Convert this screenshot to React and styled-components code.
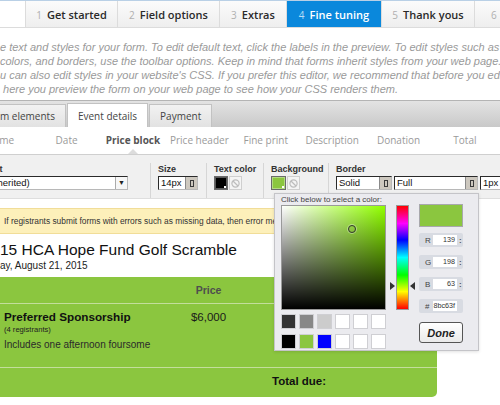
import styled, { createGlobalStyle } from "styled-components";

const GlobalStyle = createGlobalStyle`
  *, *::before, *::after { box-sizing: border-box; }
  html, body { margin: 0; padding: 0; background: #fff; }
  body { overflow: hidden; font-family: "Liberation Sans", Arial, sans-serif; }
`;

const Page = styled.div`
  position: relative;
  width: 500px;
  height: 405px;
  overflow: hidden;
  background: #fff;
`;

/* wizard steps */
const Steps = styled.ul`
  display: flex;
  height: 28px;
  margin: 0;
  padding: 0 0 0 25px;
  list-style: none;
  border-top: 1px solid #b9d0e6;
  border-bottom: 1px solid #dcdcdc;
`;

const Step = styled.li`
  flex: none;
  width: ${({ $w }) => $w}px;
  display: flex;
  align-items: center;
  justify-content: center;
  gap: 5px;
  border-left: 1px solid #dcdcdc;
  background: ${({ $active }) => ($active ? "#0a88dc" : "linear-gradient(#fbfbfb, #eeeeee)")};
  color: ${({ $active }) => ($active ? "#fff" : "#2a2a2a")};
  font: 600 11px "Open Sans", sans-serif;
  white-space: nowrap;
  overflow: hidden;
`;

const StepNum = styled.span`
  font-weight: 400;
  font-size: 10px;
  padding-top: 2px;
  color: ${({ $active }) => ($active ? "#b9ddf6" : "#b0b0b0")};
`;

const Intro = styled.div`
  padding: 12px 0 4px;
  font: italic 11px/14px "Liberation Sans", Arial, sans-serif;
  color: #9a9a9a;
  white-space: nowrap;
  overflow: hidden;
`;

/* editor panel */
const PanelTabs = styled.div`
  display: flex;
  align-items: flex-end;
  gap: 1px;
  height: 27px;
  border-top: 1px solid #b4b4b4;
  background: linear-gradient(#e3e3e3, #c9c9c9);
`;

const PanelTab = styled.div`
  height: ${({ $active }) => ($active ? 24 : 23)}px;
  display: flex;
  align-items: center;
  padding: 0 10px 0 ${({ $cut }) => ($cut ? 0 : 10)}px;
  background: ${({ $active }) => ($active ? "#fff" : "linear-gradient(#f2f2f2, #e2e2e2)")};
  border: 1px solid #c2c2c2;
  border-bottom: none;
  ${({ $cut }) => $cut && "border-left: none;"}
  font: 10px "Open Sans", sans-serif;
  color: #444;
  white-space: nowrap;
`;

const SubNav = styled.div`
  display: flex;
  height: 28px;
  margin-left: -33px;
  border-bottom: 1px solid #cfcfcf;
  background: #fff;
`;

const SubItem = styled.div`
  position: relative;
  flex: none;
  width: 66.4px;
  text-align: center;
  font: ${({ $active }) => ($active ? 700 : 400)} 10px/27px "Open Sans", sans-serif;
  color: ${({ $active }) => ($active ? "#555" : "#9a9a9a")};
  white-space: nowrap;

  &::after {
    content: "";
    display: ${({ $active }) => ($active ? "block" : "none")};
    position: absolute;
    left: 50%;
    bottom: 0;
    margin-left: -5px;
    border-left: 5px solid transparent;
    border-right: 5px solid transparent;
    border-bottom: 5px solid #dcdcdc;
  }
`;

const Toolbar = styled.div`
  display: flex;
  height: 44px;
  margin-left: -17px;
  padding-top: 8px;
  background: #f0f0f0;
  border-bottom: 1px solid #dedede;
`;

const Group = styled.div`
  flex: none;
  width: ${({ $w }) => $w}px;
  display: flex;
  flex-direction: column;
  gap: 1px;
  padding-left: ${({ $first }) => ($first ? 0 : 7)}px;
  border-left: ${({ $first }) => ($first ? "none" : "1px solid #d6d6d6")};
`;

const Label = styled.div`
  height: 12px;
  font: 700 9px/12px "Liberation Sans", Arial, sans-serif;
  color: #333;
  white-space: nowrap;
`;

const Controls = styled.div`
  display: flex;
  gap: ${({ $gap }) => $gap ?? 2}px;
  margin-left: ${({ $shift }) => $shift ?? 0}px;
`;

const Field = styled.div`
  flex: none;
  display: flex;
  width: ${({ $w }) => $w}px;
  height: 14px;
  background: #fff;
  border: 1px solid;
  border-color: #2a2a2a #b8b8b8 #b8b8b8 #2a2a2a;
  font: 9.5px/12px "Liberation Sans", Arial, sans-serif;
  color: #111;
`;

const FieldText = styled.span`
  flex: 1;
  padding-left: 2px;
  overflow: hidden;
  white-space: nowrap;
`;

const Spin = styled.span`
  flex: none;
  width: 12px;
  display: flex;
  align-items: center;
  justify-content: center;
  background: #cdc8bf;
  border-left: 1px solid #8a8a8a;

  &::before {
    content: "";
    width: 4px;
    height: 7px;
    border: 1px solid #3a3a3a;
  }
`;

const Arrow = styled.span`
  flex: none;
  width: 12px;
  display: flex;
  align-items: center;
  justify-content: center;
  background: #f6f6f6;
  border-left: 1px solid #aaa;
  font-size: 7px;
  color: #222;
`;

const Swatch = styled.span`
  position: relative;
  flex: none;
  width: ${({ $w }) => $w ?? 14}px;
  height: 14px;
  background: ${({ $color }) => $color};
  border: 1px solid #6a6a6a;
  box-shadow: inset 0 0 0 1px rgba(255, 255, 255, 0.35);

  &::after {
    content: "";
    position: absolute;
    right: 1px;
    bottom: 1px;
    width: 2px;
    height: 2px;
    background: #fff;
  }
`;

const NoColor = styled.span`
  flex: none;
  width: 13px;
  height: 14px;
  display: flex;
  align-items: center;
  justify-content: center;
  background: #f4f4f4;
  border: 1px solid #cfcfcf;
`;

function NoColorIcon() {
  return (
    <NoColor>
      <svg width="9" height="9" viewBox="0 0 9 9">
        <circle cx="4.5" cy="4.5" r="3.6" fill="none" stroke="#bdbdbd" strokeWidth="1.2" />
        <line x1="2" y1="2" x2="7" y2="7" stroke="#bdbdbd" strokeWidth="1.2" />
      </svg>
    </NoColor>
  );
}

/* form preview */
const Preview = styled.div`
  width: 437px;
  padding-top: 9px;
`;

const Notice = styled.div`
  height: 26px;
  padding-left: 4px;
  background: #fdf0ba;
  border-top: 1px solid #f1dd98;
  border-bottom: 1px solid #f1dd98;
  font: 8.4px/24px "Liberation Sans", Arial, sans-serif;
  color: #333;
  white-space: nowrap;
  overflow: hidden;
`;

const EventTitle = styled.h1`
  margin: 7px 0 0;
  font: 400 15.5px/18px "Liberation Sans", Arial, sans-serif;
  color: #111;
  white-space: nowrap;
`;

const EventDate = styled.div`
  margin-bottom: 5px;
  font: 10px/13px "Liberation Sans", Arial, sans-serif;
  color: #222;
`;

const PriceBlock = styled.div`
  background: #8bc63f;
  border-radius: 0 0 5px 0;
  font-family: "Liberation Sans", Arial, sans-serif;
`;

const PriceRow = styled.div`
  display: grid;
  grid-template-columns: 171px 75px 1fr;
  height: ${({ $h }) => $h}px;
  padding-top: ${({ $pt }) => $pt ?? 0}px;
  border-bottom: ${({ $last }) => ($last ? "none" : "1px solid #c3de9c")};
`;

const PriceHead = styled.div`
  grid-column: 2;
  text-align: center;
  font: 700 10.5px/26px "Liberation Sans", Arial, sans-serif;
  color: #4e4e4e;
`;

const ItemCell = styled.div`
  padding-left: 4px;
  color: #111;
`;

const ItemName = styled.div`
  font: 700 11.7px/14px "Liberation Sans", Arial, sans-serif;
  white-space: nowrap;
`;

const ItemNote = styled.div`
  font: 7.6px/11px "Liberation Sans", Arial, sans-serif;
  color: #222;
`;

const ItemDesc = styled.div`
  margin-top: 4px;
  font: 10px/12px "Liberation Sans", Arial, sans-serif;
  color: #2a2a2a;
  white-space: nowrap;
`;

const ItemPrice = styled.div`
  text-align: center;
  font: 11.5px/14px "Liberation Sans", Arial, sans-serif;
  color: #1a1a1a;
`;

const TotalLabel = styled.div`
  grid-column: 1 / -1;
  padding-left: 272px;
  font: 700 11.5px/14px "Liberation Sans", Arial, sans-serif;
  color: #111;
`;

/* colour picker popup */
const Picker = styled.div`
  position: absolute;
  left: 274px;
  top: 193px;
  width: 205px;
  height: 158px;
  display: grid;
  grid-template-columns: 105px 33px 44px;
  grid-template-rows: 11px 105px auto;
  padding: 0 15px 0 6px;
  background: #ebebef;
  border: 1px solid #c4c4c8;
  box-shadow: 0 1px 3px rgba(0, 0, 0, 0.12);
  font-family: "Liberation Sans", Arial, sans-serif;
`;

const PickerHint = styled.div`
  grid-column: 1 / 3;
  font: 8px/11px "Liberation Sans", Arial, sans-serif;
  color: #444;
  white-space: nowrap;
`;

const SatVal = styled.div`
  position: relative;
  grid-column: 1;
  grid-row: 2;
  border: 1px solid #9a9a9a;
  background:
    linear-gradient(to top, #000, rgba(0, 0, 0, 0)),
    linear-gradient(to right, #fff, hsl(86, 100%, 50%));
`;

const Marker = styled.span`
  position: absolute;
  left: 66px;
  top: 19px;
  width: 8px;
  height: 8px;
  border-radius: 50%;
  border: 1px solid #333;
  box-shadow: 0 0 0 1px rgba(255, 255, 255, 0.35);
`;

const HueTrack = styled.div`
  position: relative;
  grid-column: 2;
  grid-row: 2;
  margin: 0 10px;
  border: 1px solid #9a9a9a;
  background: linear-gradient(#f00, #f0f 17%, #00f 33%, #0ff 50%, #0f0 67%, #ff0 83%, #f00);

  &::before,
  &::after {
    content: "";
    position: absolute;
    top: 76px;
    border-top: 4px solid transparent;
    border-bottom: 4px solid transparent;
  }
  &::before {
    left: -7px;
    border-left: 5px solid #333;
  }
  &::after {
    right: -7px;
    border-right: 5px solid #333;
  }
`;

const SwatchGrid = styled.div`
  grid-column: 1;
  grid-row: 3;
  display: grid;
  grid-template-columns: repeat(6, 15px);
  gap: 3px;
  margin-top: 4px;
`;

const Chip = styled.span`
  height: 15px;
  background: ${({ $color }) => $color};
  border: 1px solid #cfcfd3;
`;

const PickerSide = styled.div`
  grid-column: 3;
  grid-row: 2 / 4;
  display: flex;
  flex-direction: column;
  gap: 8px;
  margin-top: -1px;
`;

const Current = styled.div`
  height: 23px;
  margin-bottom: -2px;
  background: #8bc63f;
  border: 1px solid #a8a8ac;
`;

const ValueRow = styled.div`
  display: flex;
  align-items: center;
  height: 14px;
  padding-left: 6px;
  background: #d8dbe2;
  border-radius: 2px;
  font: 8px "Liberation Sans", Arial, sans-serif;
  color: #444;
`;

const ValueLabel = styled.span`
  width: 8px;
`;

const ValueBox = styled.span`
  width: 24px;
  height: 10px;
  padding-right: 2px;
  background: #fff;
  text-align: right;
  font-size: 7.2px;
  line-height: 10px;
  color: #333;
`;

const ValueSpin = styled.span`
  margin-left: 2px;
  font-size: 8px;
  font-weight: 700;
  color: #555;
`;

const DoneButton = styled.button`
  height: 21px;
  margin-top: 1px;
  padding: 0;
  border: 1px solid #555;
  border-radius: 3px;
  background: linear-gradient(#ffffff, #eaeaea);
  font: italic 700 11px "Liberation Sans", Arial, sans-serif;
  color: #222;
`;

const steps = [
  { n: 1, label: "Get started", w: 92 },
  { n: 2, label: "Field options", w: 102 },
  { n: 3, label: "Extras", w: 67 },
  { n: 4, label: "Fine tuning", w: 95, active: true },
  { n: 5, label: "Thank yous", w: 93 },
  { n: 6, label: "Tell others", w: 100 },
];

const introLines = [
  "e text and styles for your form. To edit default text, click the labels in the preview. To edit styles such as",
  "colors, and borders, use the toolbar options. Keep in mind that forms inherit styles from your web page.",
  "u can also edit styles in your website's CSS. If you prefer this editor, we recommend that before you edit,",
  "\u00a0here you preview the form on your web page to see how your CSS renders them.",
];

const subItems = ["Name", "Date", "Price block", "Price header", "Fine print", "Description", "Donation", "Total"];

const chips = ["#333333", "#888888", "#cccccc", "#fff", "#fff", "#fff", "#000000", "#8bc63f", "#0000ff", "#fff", "#fff", "#fff"];

const values = [
  ["R", "139"],
  ["G", "198"],
  ["B", "63"],
];

export default function App() {
  return (
    <Page>
      <GlobalStyle />
      <Steps>
        {steps.map((s) => (
          <Step key={s.n} $w={s.w} $active={s.active}>
            <StepNum $active={s.active}>{s.n}</StepNum>
            {s.label}
          </Step>
        ))}
      </Steps>

      <Intro>
        {introLines.map((line) => (
          <div key={line}>{line}</div>
        ))}
      </Intro>

      <PanelTabs>
        <PanelTab $cut>m elements</PanelTab>
        <PanelTab $active>Event details</PanelTab>
        <PanelTab>Payment</PanelTab>
      </PanelTabs>

      <SubNav>
        {subItems.map((item) => (
          <SubItem key={item} $active={item === "Price block"}>
            {item}
          </SubItem>
        ))}
      </SubNav>

      <Toolbar>
        <Group $w={167} $first>
          <Label>Font</Label>
          <Controls $shift={1}>
            <Field $w={144}>
              <FieldText>(inherited)</FieldText>
              <Arrow>▼</Arrow>
            </Field>
          </Controls>
        </Group>
        <Group $w={56}>
          <Label>Size</Label>
          <Controls>
            <Field $w={40}>
              <FieldText>14px</FieldText>
              <Spin />
            </Field>
          </Controls>
        </Group>
        <Group $w={57}>
          <Label>Text color</Label>
          <Controls $gap={1}>
            <Swatch $color="#000" />
            <NoColorIcon />
          </Controls>
        </Group>
        <Group $w={65}>
          <Label>Background</Label>
          <Controls $gap={1}>
            <Swatch $color="#8bc63f" $w={15} />
            <NoColorIcon />
          </Controls>
        </Group>
        <Group $w={200}>
          <Label>Border</Label>
          <Controls>
            <Field $w={56}>
              <FieldText>Solid</FieldText>
              <Spin />
            </Field>
            <Field $w={84}>
              <FieldText>Full</FieldText>
              <Spin />
            </Field>
            <Field $w={40}>
              <FieldText>1px</FieldText>
              <Spin />
            </Field>
          </Controls>
        </Group>
      </Toolbar>

      <Preview>
        <Notice>
          If registrants submit forms with errors such as missing data, then error messages appear here.
        </Notice>
        <EventTitle>15 HCA Hope Fund Golf Scramble</EventTitle>
        <EventDate>ay, August 21, 2015</EventDate>
        <PriceBlock>
          <PriceRow $h={27}>
            <PriceHead>Price</PriceHead>
          </PriceRow>
          <PriceRow $h={64} $pt={6}>
            <ItemCell>
              <ItemName>Preferred Sponsorship</ItemName>
              <ItemNote>(4 registrants)</ItemNote>
              <ItemDesc>Includes one afternoon foursome</ItemDesc>
            </ItemCell>
            <ItemPrice>$6,000</ItemPrice>
          </PriceRow>
          <PriceRow $h={29} $pt={6} $last>
            <TotalLabel>Total due:</TotalLabel>
          </PriceRow>
        </PriceBlock>
      </Preview>

      <Picker>
        <PickerHint>Click below to select a color:</PickerHint>
        <SatVal>
          <Marker />
        </SatVal>
        <HueTrack />
        <SwatchGrid>
          {chips.map((c, i) => (
            <Chip key={i} $color={c} />
          ))}
        </SwatchGrid>
        <PickerSide>
          <Current />
          {values.map(([k, v]) => (
            <ValueRow key={k}>
              <ValueLabel>{k}</ValueLabel>
              <ValueBox>{v}</ValueBox>
              <ValueSpin>:</ValueSpin>
            </ValueRow>
          ))}
          <ValueRow>
            <ValueLabel>#</ValueLabel>
            <ValueBox>8bc63f</ValueBox>
          </ValueRow>
          <DoneButton>Done</DoneButton>
        </PickerSide>
      </Picker>
    </Page>
  );
}
